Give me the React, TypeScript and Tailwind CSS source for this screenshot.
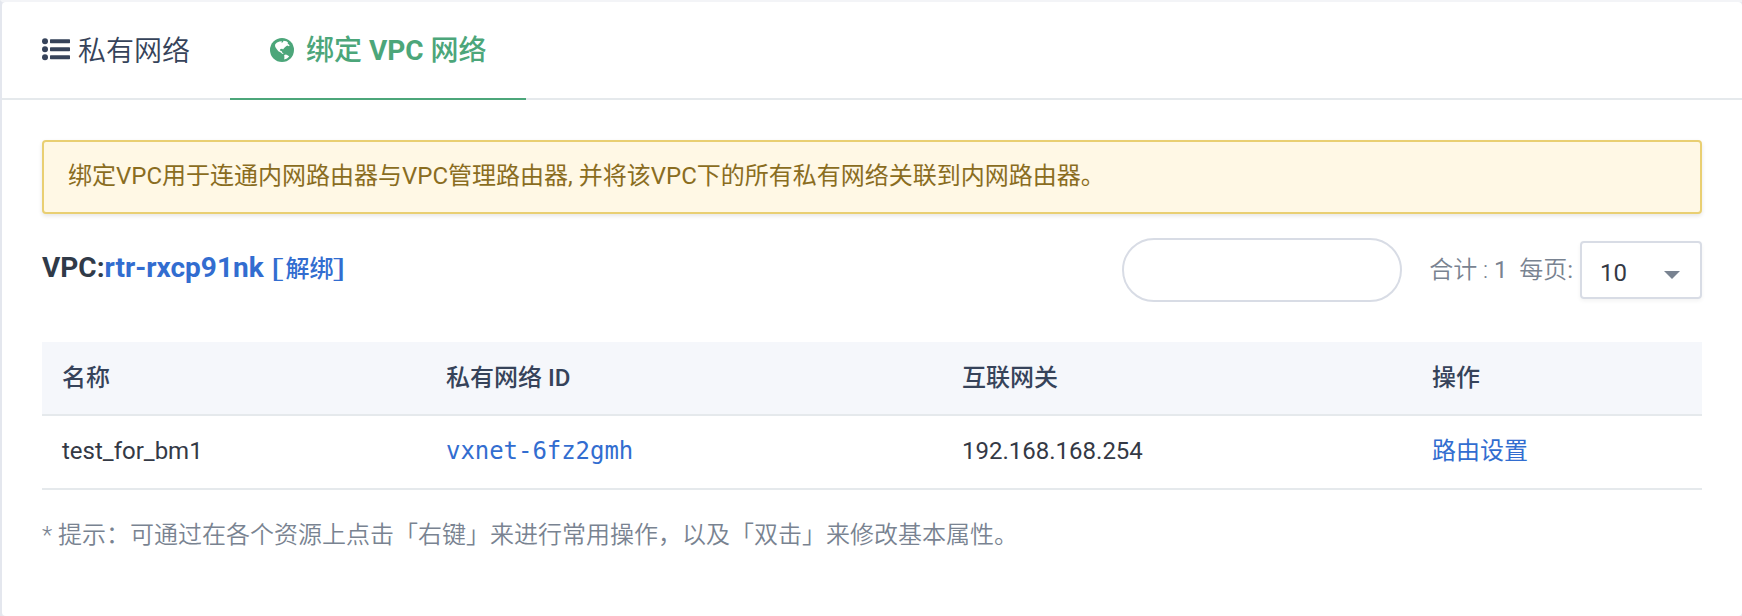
import React from "react";

const columns = ["名称", "私有网络 ID", "互联网关", "操作"];

function ListIcon() {
  return (
    <svg className="h-[24px] w-[28px] fill-[#36435a]" viewBox="0 0 28 24">
      <circle cx="3" cy="3.2" r="3" />
      <circle cx="3" cy="11.2" r="3" />
      <circle cx="3" cy="19.2" r="3" />
      <rect x="8" y="1.2" width="20" height="4" rx="0.6" />
      <rect x="8" y="9.2" width="20" height="4" rx="0.6" />
      <rect x="8" y="17.2" width="20" height="4" rx="0.6" />
    </svg>
  );
}

function GlobeIcon() {
  return (
    <svg className="h-6 w-6" viewBox="0 0 24 24">
      <circle cx="12" cy="12" r="12" fill="#4ca67a" />
      <path
        fill="#fff"
        d="M5.2 6.2 L7 4.6 L9.5 3.4 L12 3.2 L11.2 4.6 L12.6 4.4 L13.6 2.8 L16.4 3.2 L18 4.6 L17.6 5.6 L19.6 7.2 L19 8.2 L17.2 7.6 L15.8 8.6 L14.4 9.8 L13 11.4 L12.2 10.8 L10.4 11 L9.8 12.6 L11.4 13 L12 13.8 L12.6 15.2 L14 16 L12.4 16 L10.8 14.6 L8.4 13.2 L7 11.4 L5.6 9.4 L5 8 Z M14.2 17 L16 16.6 L18 17.6 L19.2 18.4 L17 20.4 L14.2 21.6 L14.4 19.6 Z"
      />
    </svg>
  );
}

export default function App() {
  return (
    <div className="h-[616px] w-full overflow-hidden border-l-2 border-t-2 border-l-[#e4e7ee] border-t-[#f3f4f7] bg-[#e9ebf1] font-[Roboto,'Noto_Sans_CJK_SC',sans-serif] text-2xl text-[#343945]">
      <div className="h-[614px] rounded-[4px] bg-white">
        <nav className="flex h-[98px] border-b-2 border-[#e5e9ec] text-[28px] leading-[40px] text-[#36435a]">
          <a className="flex h-[98px] w-[228px] items-center pb-[2px] pl-10 font-[350]">
            <ListIcon />
            <span className="ml-2 pt-1">私有网络</span>
          </a>
          <a className="flex h-[98px] w-[296px] items-center border-b-2 border-[#4ca67a] pl-10 font-medium text-[#4ca67a]">
            <GlobeIcon />
            <span className="ml-3 pt-[2px]">
              绑定 <b className="font-bold">VPC</b> 网络
            </span>
          </a>
        </nav>
        <main className="px-10 pt-10">
          <div className="flex h-[74px] items-center rounded-[4px] border-2 border-[#e9cf72] bg-[#fff8e5] pb-[2px] pl-6 text-[#8a6d1f] shadow-[0_2px_4px_rgba(0,0,0,0.1)]">
            绑定VPC用于连通内网路由器与VPC管理路由器, 并将该VPC下的所有私有网络关联到内网路由器。
          </div>
          <div className="mt-6 flex h-16 items-center">
            <h2 className="grow pb-1 text-[28px] font-bold text-[#303a48]">
              VPC:<a className="text-[#326dd0]">rtr-rxcp91nk </a>
              <a className="text-2xl font-medium text-[#326dd0]">
                <span className="-ml-[2px] inline-block w-[17px] origin-left scale-x-[1.9] font-['Noto_Sans_CJK_SC',sans-serif] font-normal">[</span>
                <span>解绑</span>
                <span className="-ml-[2px] inline-block origin-left scale-x-[1.9] font-['Noto_Sans_CJK_SC',sans-serif] font-normal">]</span>
              </a>
            </h2>
            <div className="h-16 w-[280px] rounded-[32px] border-2 border-[#d8dce5]" />
            <span className="ml-[27px] whitespace-pre font-[350] text-[#798391]">
              合计 : <span className="font-normal">1</span>  每页<span className="font-normal">:</span>
            </span>
            <div className="ml-[7px] flex h-[58px] w-[122px] items-center justify-between rounded-[4px] border-2 border-[#d8dce5] pl-[18px] pr-5 pt-[6px] shadow-[0_2px_4px_rgba(0,0,0,0.05)]">
              <span>10</span>
              <svg className="mt-1 h-2 w-4 fill-[#798391]" viewBox="0 0 16 8">
                <path d="M0 0H16L8 8Z" />
              </svg>
            </div>
          </div>
          <div className="mt-10 grid h-[74px] grid-cols-[384px_516px_470px_1fr] items-center border-b-2 border-[#e5e9ec] bg-[#f5f7fb] pl-5 font-medium text-[#36435a]">
            {columns.map((c) => (
              <span key={c}>{c}</span>
            ))}
          </div>
          <div className="grid h-[74px] grid-cols-[384px_516px_470px_1fr] items-center border-b-2 border-[#e5e9ec] pb-[2px] pl-5">
            <span>test_for_bm1</span>
            <a className="font-['DejaVu_Sans_Mono',monospace] tracking-[-0.05px] text-[#326dd0]">vxnet-6fz2gmh</a>
            <span>192.168.168.254</span>
            <a className="text-[#326dd0]">路由设置</a>
          </div>
          <p className="mt-[29px] font-[350] text-[#798391]">
            * 提示：可通过在各个资源上点击「右键」来进行常用操作，以及「双击」来修改基本属性。
          </p>
        </main>
      </div>
    </div>
  );
}
